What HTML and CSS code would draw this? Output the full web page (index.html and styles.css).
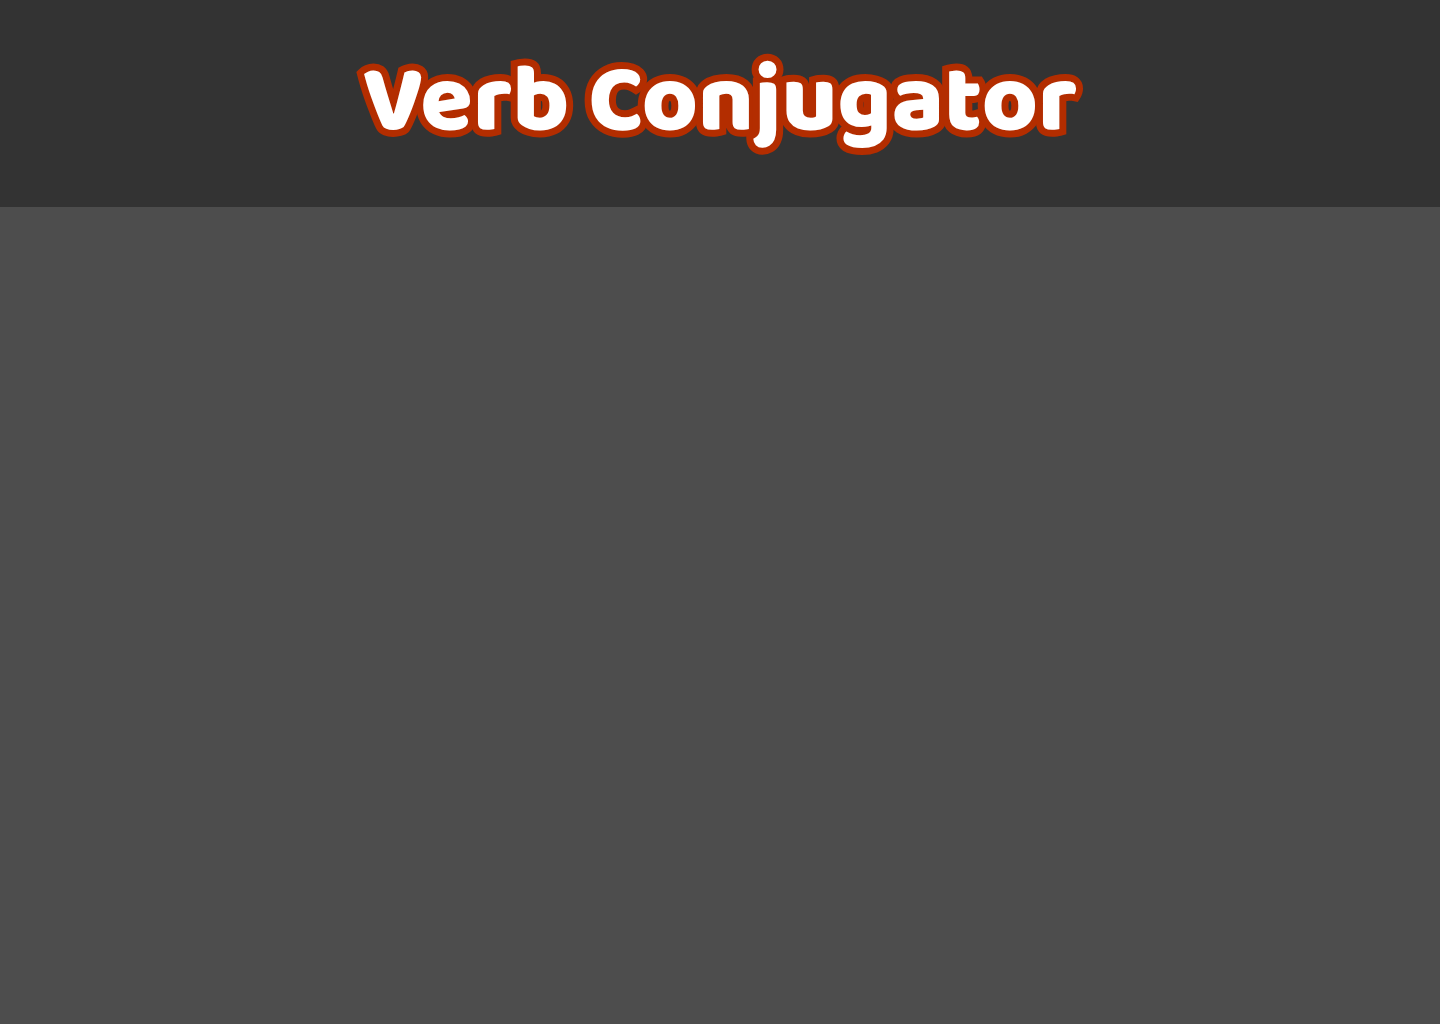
FILE: index.html
```html
<!DOCTYPE html>
<html lang="en">
<head>
<meta charset="utf-8">
<title>Verb Conjugator</title>
<link rel="stylesheet" href="styles.css">
</head>
<body>
<header class="banner">
<h1 class="title">Verb Conjugator</h1>
</header>
<main></main>
</body>
</html>
```

FILE: styles.css
```css
body {
  margin: 0;
  background: #4d4d4d;
  font-family: "Baloo 2", "Lato", "Open Sans", sans-serif;
}

.banner {
  padding: 32px 16px;
  background: #333;
  text-align: center;
}

.title {
  margin: 0;
  color: #fff;
  font-size: 96px;
  font-weight: 800;
  line-height: 143px;
  text-rendering: geometricPrecision;
  -webkit-text-stroke: 14px #b32d00;
  paint-order: stroke fill;
}
```
